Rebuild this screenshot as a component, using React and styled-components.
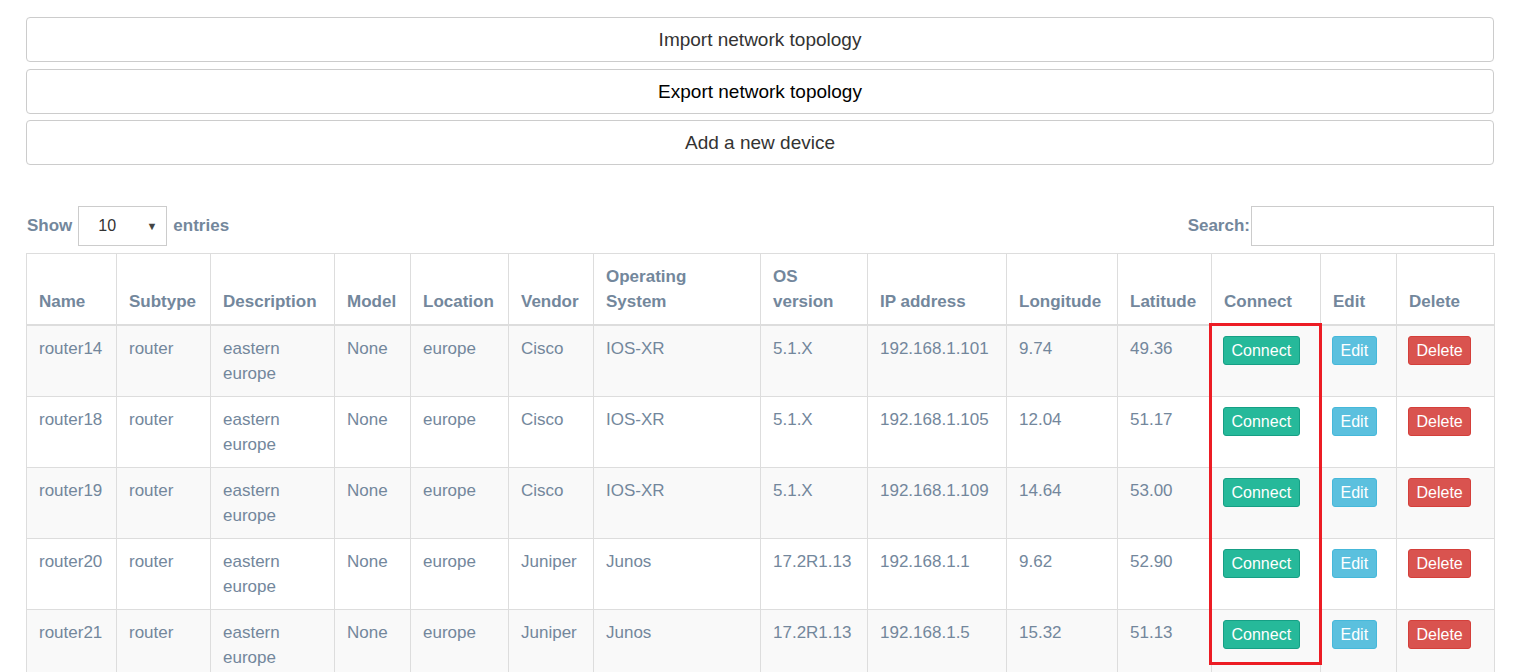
import styled, { createGlobalStyle } from "styled-components";

const GlobalStyle = createGlobalStyle`
	html, body {
		margin: 0;
		padding: 0;
		overflow: hidden;
		background: #fff;
		font-family: "Liberation Sans", Arial, sans-serif;
	}
	* {
		box-sizing: border-box;
	}
`;

const columns = [
	{ key: "name", label: "Name", width: 90 },
	{ key: "subtype", label: "Subtype", width: 94 },
	{ key: "description", label: "Description", width: 124 },
	{ key: "model", label: "Model", width: 76 },
	{ key: "location", label: "Location", width: 98 },
	{ key: "vendor", label: "Vendor", width: 85 },
	{ key: "os", label: "Operating System", width: 167 },
	{ key: "version", label: "OS version", width: 107 },
	{ key: "ip", label: "IP address", width: 139 },
	{ key: "lon", label: "Longitude", width: 111 },
	{ key: "lat", label: "Latitude", width: 94 },
	{ key: "connect", label: "Connect", width: 109 },
	{ key: "edit", label: "Edit", width: 76 },
	{ key: "delete", label: "Delete", width: 98 },
];

const devices = [
	["router14", "Cisco", "IOS-XR", "5.1.X", "192.168.1.101", "9.74", "49.36"],
	["router18", "Cisco", "IOS-XR", "5.1.X", "192.168.1.105", "12.04", "51.17"],
	["router19", "Cisco", "IOS-XR", "5.1.X", "192.168.1.109", "14.64", "53.00"],
	["router20", "Juniper", "Junos", "17.2R1.13", "192.168.1.1", "9.62", "52.90"],
	["router21", "Juniper", "Junos", "17.2R1.13", "192.168.1.5", "15.32", "51.13"],
];

const App = () => {
	return (
		<Page>
			<GlobalStyle />
			<ActionList>
				<ActionButton>Import network topology</ActionButton>
				<ActionButton $strong>Export network topology</ActionButton>
				<ActionButton>Add a new device</ActionButton>
			</ActionList>

			<Controls>
				<Label>
					Show
					<FakeSelect>
						<span>10</span>
						<Caret>▼</Caret>
					</FakeSelect>
					entries
				</Label>
				<Label>
					Search:
					<SearchInput type="text" />
				</Label>
			</Controls>

			<Table>
				<colgroup>
					{columns.map((c) => (
						<col key={c.key} style={{ width: c.width }} />
					))}
				</colgroup>
				<thead>
					<tr>
						{columns.map((c) => (
							<Th key={c.key}>{c.label}</Th>
						))}
					</tr>
				</thead>
				<tbody>
					{devices.map(([name, vendor, os, version, ip, lon, lat]) => (
						<Row key={name}>
							<Td>{name}</Td>
							<Td>router</Td>
							<Td>eastern europe</Td>
							<Td>None</Td>
							<Td>europe</Td>
							<Td>{vendor}</Td>
							<Td>{os}</Td>
							<Td>{version}</Td>
							<Td>{ip}</Td>
							<Td>{lon}</Td>
							<Td>{lat}</Td>
							<Td>
								<SmallButton $variant="success">Connect</SmallButton>
							</Td>
							<Td>
								<SmallButton $variant="info">Edit</SmallButton>
							</Td>
							<Td>
								<SmallButton $variant="danger">Delete</SmallButton>
							</Td>
						</Row>
					))}
				</tbody>
			</Table>

			<Highlight />
		</Page>
	);
};

const Page = styled.div`
	position: relative;
	width: 1524px;
	height: 672px;
	padding: 17px 30px 0 26px;
	color: #73879c;
`;

const ActionList = styled.div`
	display: flex;
	flex-direction: column;
	gap: 6px;

	> :nth-child(2) {
		margin-top: 1px;
	}
`;

const ActionButton = styled.button`
	height: 45px;
	width: 100%;
	background: #fff;
	border: 1px solid #ccc;
	border-radius: 4px;
	font-family: "Liberation Sans", Arial, sans-serif;
	font-size: 19px;
	color: ${(p) => (p.$strong ? "#000" : "#333")};
	cursor: pointer;
`;

const Controls = styled.div`
	display: flex;
	justify-content: space-between;
	align-items: center;
	margin-top: 41px;
	height: 40px;
`;

const Label = styled.label`
	display: flex;
	align-items: center;
	gap: 5px;
	padding-left: 1px;
	font-size: 17px;
	font-weight: bold;
	color: #73879c;
`;

const FakeSelect = styled.div`
	width: 89px;
	height: 40px;
	display: flex;
	align-items: center;
	justify-content: space-between;
	padding: 0 9px 0 19px;
	margin: 0 1px 0 1px;
	border: 1px solid #ccc;
	font-size: 16px;
	font-weight: normal;
	color: #333;
`;

const Caret = styled.span`
	font-size: 11px;
	color: #444;
`;

const SearchInput = styled.input`
	width: 243px;
	height: 40px;
	margin-left: -4px;
	border: 1px solid #ccc;
	outline: none;
`;

const Table = styled.table`
	margin-top: 7px;
	width: 1468px;
	table-layout: fixed;
	border-collapse: collapse;
	border: 1px solid #ddd;
	font-size: 17px;
	line-height: 25px;
`;

const Th = styled.th`
	text-align: left;
	vertical-align: bottom;
	padding: 10px 12px;
	border: 1px solid #ddd;
	border-bottom: 2px solid #ddd;
	font-weight: bold;
`;

const Row = styled.tr`
	&:nth-child(odd) {
		background: #f9f9f9;
	}
`;

const Td = styled.td`
	vertical-align: top;
	padding: 10px 12px;
	border: 1px solid #ddd;
	height: 71px;
`;

const variants = {
	success: { bg: "#26b99a", border: "#169f85" },
	info: { bg: "#5bc0de", border: "#46b8da" },
	danger: { bg: "#d9534f", border: "#d43f3a" },
};

const SmallButton = styled.button`
	display: inline-block;
	margin-left: -1px;
	padding: 4px 7.5px;
	font-family: "Liberation Sans", Arial, sans-serif;
	font-size: 16px;
	line-height: 19px;
	color: #fff;
	border-radius: 3px;
	background: ${(p) => variants[p.$variant].bg};
	border: 1px solid ${(p) => variants[p.$variant].border};
	cursor: pointer;
`;

const Highlight = styled.div`
	position: absolute;
	left: 1209px;
	top: 323px;
	width: 113px;
	height: 342px;
	border: 3px solid #ec1c24;
	pointer-events: none;
`;

export default App;
